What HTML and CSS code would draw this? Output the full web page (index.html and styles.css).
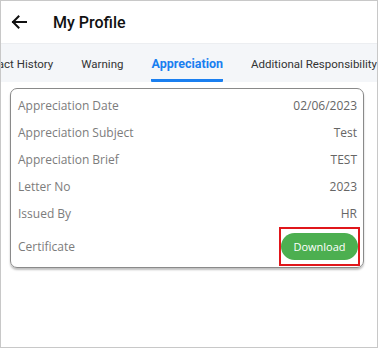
FILE: index.html
```html
<!DOCTYPE html>
<html lang="en">
<head>
    <meta charset="UTF-8">
    <meta name="viewport" content="width=device-width, initial-scale=1.0">
    <title>My Profile</title>
    <link rel="stylesheet" href="styles.css">
</head>
<body>
    <div class="screen">
        <header class="topbar">
            <svg class="back" width="16" height="14" viewBox="0 0 16 14">
                <path d="M15 7H2M7.5 1.5L2 7l5.5 5.5" fill="none" stroke="#111" stroke-width="2" stroke-linecap="square"/>
            </svg>
            <h1>My Profile</h1>
        </header>

        <nav class="tabs">
            <div class="tab-list">
                <span class="tab">Contract History</span>
                <span class="tab">Warning</span>
                <span class="tab active">Appreciation</span>
                <span class="tab">Additional Responsibility</span>
            </div>
        </nav>

        <div class="card">
            <div class="row"><span class="label">Appreciation Date</span><span class="value">02/06/2023</span></div>
            <div class="row"><span class="label">Appreciation Subject</span><span class="value">Test</span></div>
            <div class="row"><span class="label">Appreciation Brief</span><span class="value">TEST</span></div>
            <div class="row"><span class="label">Letter No</span><span class="value">2023</span></div>
            <div class="row"><span class="label">Issued By</span><span class="value">HR</span></div>
            <div class="row last">
                <span class="label">Certificate</span>
                <span class="highlight"><button class="download">Download</button></span>
            </div>
        </div>
    </div>
</body>
</html>
```

FILE: styles.css
```css
/* General Styles */
body {
    margin: 0;
    background-color: #FFFFFF;
    font-family: Roboto, "Liberation Sans", sans-serif;
}

.screen {
    width: 378px;
    height: 348px;
    box-sizing: border-box;
    border: 1px solid #C8C8C8;
    overflow: hidden;
}

/* Header */
.topbar {
    height: 42px;
    display: flex;
    align-items: center;
    padding-left: 10px;
    border-bottom: 1px solid #ECEEF1;
}

.back {
    margin-right: 26px;
}

.topbar h1 {
    margin: 0;
    font-size: 16px;
    font-weight: 500;
    color: #111111;
}

/* Tabs */
.tabs {
    height: 38px;
    background-color: #F4F6F9;
    overflow: hidden;
}

.tab-list {
    display: flex;
    height: 38px;
    margin-left: -45px;
    white-space: nowrap;
}

.tab {
    margin: 0 14px;
    padding-top: 2px;
    font-size: 11.5px;
    color: #333333;
    line-height: 36px;
    box-sizing: border-box;
    border-bottom: 3px solid transparent;
}

.tab.active {
    color: #1A7FF0;
    font-size: 12.5px;
    font-weight: 700;
    border-bottom-color: #1A7FF0;
    border-radius: 1px;
}

/* Card */
.card {
    margin: 6px 13px 0 9px;
    padding: 3px 6px 2px 7px;
    border: 1px solid #8A8A8A;
    border-radius: 7px;
    box-shadow: 0 2px 2px rgba(0, 0, 0, 0.25);
}

.row {
    display: flex;
    justify-content: space-between;
    align-items: center;
    height: 27px;
    font-family: "Open Sans", sans-serif;
    font-size: 12px;
}

.label {
    color: #7C7C7C;
}

.value {
    color: #666666;
}

.row.last {
    height: 38px;
    margin-right: -3px;
}

.highlight {
    display: flex;
    padding: 4px 0;
    border: 2px solid #E0161B;
}

.download {
    width: 77px;
    height: 27px;
    border: none;
    border-radius: 14px;
    background-color: #4CAF50;
    color: #FFFFFF;
    font-family: "Open Sans", sans-serif;
    font-size: 11px;
}
```
